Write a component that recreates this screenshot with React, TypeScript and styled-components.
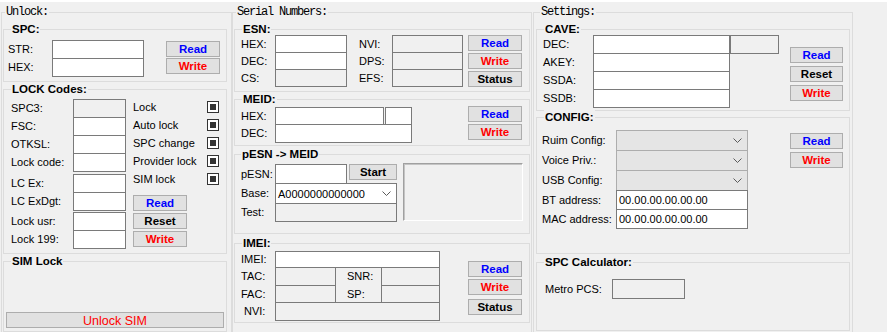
import React from "react";
import styled, { createGlobalStyle } from "styled-components";

const BLUE = "#0000ff";
const RED = "#ff0000";
const INK = "#000";

const GlobalStyle = createGlobalStyle`
  html, body { margin: 0; padding: 0; background: #f0f0f0; overflow: hidden; }
  body { font-family: "Liberation Sans", Arial, sans-serif; font-size: 11px; color: ${INK}; }
`;

const Window = styled.div`
  box-sizing: border-box;
  width: 887px;
  height: 332px;
  overflow: hidden;
  background: #f0f0f0;
  border-top: 2px solid #fff;
`;

const Columns = styled.div`
  display: flex;
  align-items: flex-start;
  padding: 10px 0 0 1px;
`;

const Frame = styled.div<{ $w: number; $h: number; $ml?: number; $mt?: number }>`
  position: relative;
  flex: none;
  box-sizing: border-box;
  width: ${p => p.$w}px;
  height: ${p => p.$h}px;
  margin: ${p => p.$mt ?? 0}px 0 0 ${p => p.$ml ?? 0}px;
  border: 1px solid #dcdcdc;
`;

// group box caption sits over the frame line
const Caption = styled.span<{ $x: number; $mono?: boolean }>`
  position: absolute;
  top: -8px;
  left: ${p => p.$x}px;
  padding: 0 1px;
  background: #f0f0f0;
  white-space: nowrap;
  line-height: 14px;
  font-family: ${p => (p.$mono ? '"Liberation Mono", monospace' : '"Liberation Sans", Arial, sans-serif')};
  font-size: ${p => (p.$mono ? "12px" : "11.5px")};
  font-weight: ${p => (p.$mono ? 400 : 700)};
  letter-spacing: ${p => (p.$mono ? "-1.2px" : "0")};
`;

const Pane = styled.div<{ $pt: number; $pl: number }>`
  display: flex;
  align-items: flex-start;
  padding: ${p => p.$pt}px 0 0 ${p => p.$pl}px;
`;

const Stack = styled.div<{ $mt?: number; $ml?: number }>`
  display: flex;
  flex-direction: column;
  align-items: flex-start;
  margin: ${p => p.$mt ?? 0}px 0 0 ${p => p.$ml ?? 0}px;
  & > * + * { margin-top: -1px; }
`;

const Col = styled.div`
  display: flex;
  flex-direction: column;
`;

const Row = styled.div`
  display: flex;
  align-items: center;
`;

const Label = styled.span<{ $w: number; $pl?: number }>`
  flex: none;
  box-sizing: border-box;
  width: ${p => p.$w}px;
  padding-left: ${p => p.$pl ?? 0}px;
  line-height: 13px;
  white-space: nowrap;
`;

const Box = styled.div<{ $w: number; $h: number; $ro?: boolean; $ml?: number }>`
  flex: none;
  box-sizing: border-box;
  display: flex;
  align-items: center;
  width: ${p => p.$w}px;
  height: ${p => p.$h}px;
  margin-left: ${p => p.$ml ?? 0}px;
  padding-left: 2px;
  border: 1px solid #7a7a7a;
  background: ${p => (p.$ro ? "#f0f0f0" : "#fff")};
  white-space: nowrap;
`;

const Combo = styled.div<{ $w: number; $h: number; $off?: boolean }>`
  flex: none;
  box-sizing: border-box;
  display: flex;
  align-items: center;
  justify-content: space-between;
  width: ${p => p.$w}px;
  height: ${p => p.$h}px;
  padding: 0 5px 0 2px;
  border: 1px solid ${p => (p.$off ? "#adadad" : "#7a7a7a")};
  background: ${p => (p.$off ? "#e5e5e5" : "#fff")};
  white-space: nowrap;
`;

const Sunken = styled.div`
  flex: none;
  box-sizing: border-box;
  width: 120px;
  height: 58px;
  margin: -1px 0 0 6px;
  border: 1px solid;
  border-color: #a0a0a0 #fff #fff #a0a0a0;
  box-shadow: inset 1px 1px 0 #c4c4c4;
  background: #f0f0f0;
`;

const BtnCol = styled.div<{ $ml: number; $mt?: number; $gap: number }>`
  display: flex;
  flex-direction: column;
  gap: ${p => p.$gap}px;
  margin: ${p => p.$mt ?? 0}px 0 0 ${p => p.$ml}px;
`;

const Btn = styled.button<{ $w?: number; $c?: string; $mt?: number; $ml?: number; $plain?: boolean }>`
  flex: none;
  box-sizing: border-box;
  display: flex;
  align-items: flex-start;
  justify-content: center;
  align-self: flex-start;
  width: ${p => p.$w ?? 54}px;
  height: 16px;
  margin: ${p => p.$mt ?? 0}px 0 0 ${p => p.$ml ?? 0}px;
  padding: 0;
  border: 1px solid #adadad;
  background: #e1e1e1;
  color: ${p => p.$c ?? INK};
  font-family: "Liberation Sans", Arial, sans-serif;
  font-size: ${p => (p.$plain ? "12.5px" : "11.5px")};
  font-weight: ${p => (p.$plain ? 400 : 700)};
  span {
    display: block;
    line-height: ${p => (p.$plain ? 16 : 14)}px;
    white-space: nowrap;
  }
`;

const Side = styled.div`
  display: flex;
  flex-direction: column;
  width: 88px;
  margin: -1px 0 0 7px;
`;

const CheckRow = styled.div`
  display: flex;
  align-items: center;
  justify-content: space-between;
  height: 18px;
  padding-right: 2px;
`;

const Check = styled.span`
  flex: none;
  box-sizing: border-box;
  width: 12px;
  height: 12px;
  padding: 2px;
  border: 1px solid #333;
  background: #fff;
  &::after {
    content: "";
    display: block;
    width: 6px;
    height: 6px;
    background: #333;
  }
`;

const SideBtns = styled.div`
  display: flex;
  flex-direction: column;
  align-items: flex-end;
  gap: 2px;
  margin-top: 7px;
`;

const Chevron = () => (
  <svg width="9" height="5" viewBox="0 0 9 5">
    <polyline points="0.5,0.5 4.5,4.5 8.5,0.5" fill="none" stroke="#5a5a5a" strokeWidth="1" />
  </svg>
);

const B = ({ c, w, mt, ml, plain, children }: { c?: string; w?: number; mt?: number; ml?: number; plain?: boolean; children: React.ReactNode }) => (
  <Btn $c={c} $w={w} $mt={mt} $ml={ml} $plain={plain}><span>{children}</span></Btn>
);

const lockA: [string, boolean][] = [["SPC3:", true], ["FSC:", false], ["OTKSL:", false], ["Lock code:", false]];
const lockB = ["LC Ex:", "LC ExDgt:"];
const lockC = ["Lock usr:", "Lock 199:"];
const checks = ["Lock", "Auto lock", "SPC change", "Provider lock", "SIM lock"];

const LockStack = ({ items, mt }: { items: [string, boolean][]; mt?: number }) => (
  <Stack $mt={mt}>
    {items.map(([t, ro]) => (
      <Row key={t}><Label $w={62}>{t}</Label><Box $w={53} $h={19} $ro={ro} /></Row>
    ))}
  </Stack>
);

const Unlock = () => (
  <Frame $w={231} $h={340}>
    <Caption $x={3} $mono>Unlock:</Caption>

    <Frame $w={224} $h={53} $ml={1} $mt={16}>
      <Caption $x={7}>SPC:</Caption>
      <Pane $pt={10} $pl={4}>
        <Stack>
          <Row><Label $w={44}>STR:</Label><Box $w={92} $h={19} /></Row>
          <Row><Label $w={44}>HEX:</Label><Box $w={92} $h={19} /></Row>
        </Stack>
        <BtnCol $ml={22} $mt={1} $gap={1}>
          <B c={BLUE}>Read</B>
          <B c={RED}>Write</B>
        </BtnCol>
      </Pane>
    </Frame>

    <Frame $w={224} $h={165} $ml={1} $mt={7}>
      <Caption $x={7}>LOCK Codes:</Caption>
      <Pane $pt={9} $pl={7}>
        <Col>
          <LockStack items={lockA} />
          <LockStack items={lockB.map(t => [t, false] as [string, boolean])} mt={2} />
          <LockStack items={lockC.map(t => [t, false] as [string, boolean])} mt={1} />
        </Col>
        <Side>
          {checks.map(t => (
            <CheckRow key={t}><span>{t}</span><Check /></CheckRow>
          ))}
          <SideBtns>
            <B c={BLUE}>Read</B>
            <B>Reset</B>
            <B c={RED}>Write</B>
          </SideBtns>
        </Side>
      </Pane>
    </Frame>

    <Frame $w={224} $h={71} $ml={1} $mt={7}>
      <Caption $x={7}>SIM Lock</Caption>
      <Pane $pt={50} $pl={2}>
        <B c={RED} w={218} plain>Unlock SIM</B>
      </Pane>
    </Frame>
  </Frame>
);

const esnLeft: [string, boolean][] = [["HEX:", false], ["DEC:", false], ["CS:", true]];
const esnRight = ["NVI:", "DPS:", "EFS:"];

const Serial = () => (
  <Frame $w={300} $h={340}>
    <Caption $x={3} $mono>Serial Numbers:</Caption>

    <Frame $w={296} $h={63} $ml={1} $mt={16}>
      <Caption $x={7}>ESN:</Caption>
      <Pane $pt={5} $pl={6}>
        <Stack>
          {esnLeft.map(([t, ro]) => (
            <Row key={t}><Label $w={34}>{t}</Label><Box $w={72} $h={18} $ro={ro} /></Row>
          ))}
        </Stack>
        <Stack $ml={12}>
          {esnRight.map(t => (
            <Row key={t}><Label $w={33}>{t}</Label><Box $w={71} $h={18} $ro /></Row>
          ))}
        </Stack>
        <BtnCol $ml={5} $gap={2}>
          <B c={BLUE}>Read</B>
          <B c={RED}>Write</B>
          <B>Status</B>
        </BtnCol>
      </Pane>
    </Frame>

    <Frame $w={296} $h={47} $ml={1} $mt={7}>
      <Caption $x={7}>MEID:</Caption>
      <Pane $pt={7} $pl={6}>
        <Stack>
          <Row><Label $w={34}>HEX:</Label><Box $w={109} $h={18} /><Box $w={27} $h={18} $ml={1} /></Row>
          <Row><Label $w={34}>DEC:</Label><Box $w={137} $h={19} /></Row>
        </Stack>
        <BtnCol $ml={56} $mt={-1} $gap={2}>
          <B c={BLUE}>Read</B>
          <B c={RED}>Write</B>
        </BtnCol>
      </Pane>
    </Frame>

    <Frame $w={296} $h={80} $ml={1} $mt={8}>
      <Caption $x={6}>pESN -&gt; MEID</Caption>
      <Pane $pt={9} $pl={6}>
        <Stack>
          <Row><Label $w={34}>pESN:</Label><Box $w={72} $h={20} /><B w={48} ml={2}>Start</B></Row>
          <Row><Label $w={34}>Base:</Label><Combo $w={122} $h={21}>A0000000000000<Chevron /></Combo></Row>
          <Row><Label $w={34}>Test:</Label><Box $w={122} $h={19} $ro /></Row>
        </Stack>
        <Sunken />
      </Pane>
    </Frame>

    <Frame $w={296} $h={80} $ml={1} $mt={9}>
      <Caption $x={7}>IMEI:</Caption>
      <Pane $pt={7} $pl={6}>
        <Stack>
          <Row><Label $w={34}>IMEI:</Label><Box $w={165} $h={17} /></Row>
          <Row>
            <Label $w={34}>TAC:</Label><Box $w={61} $h={19} $ro />
            <Label $w={45} $pl={11}>SNR:</Label><Box $w={59} $h={19} $ro />
          </Row>
          <Row>
            <Label $w={34}>FAC:</Label><Box $w={61} $h={18} $ro />
            <Label $w={45} $pl={11}>SP:</Label><Box $w={59} $h={18} $ro />
          </Row>
          <Row><Label $w={34} $pl={3}>NVI:</Label><Box $w={165} $h={19} $ro /></Row>
        </Stack>
        <BtnCol $ml={28} $mt={10} $gap={2}>
          <B c={BLUE}>Read</B>
          <B c={RED}>Write</B>
          <B mt={2}>Status</B>
        </BtnCol>
      </Pane>
    </Frame>
  </Frame>
);

const caveRows = ["AKEY:", "SSDA:", "SSDB:"];
const configCombos = ["Ruim Config:", "Voice Priv.:", "USB Config:"];
const configAddr = ["BT address:", "MAC address:"];

const Settings = () => (
  <Frame $w={320} $h={340} $ml={1}>
    <Caption $x={6} $mono>Settings:</Caption>

    <Frame $w={314} $h={82} $ml={2} $mt={16}>
      <Caption $x={7}>CAVE:</Caption>
      <Pane $pt={5} $pl={6}>
        <Stack>
          <Row><Label $w={50}>DEC:</Label><Box $w={137} $h={19} /><Box $w={49} $h={19} $ro /></Row>
          {caveRows.map(t => (
            <Row key={t}><Label $w={50}>{t}</Label><Box $w={137} $h={19} /></Row>
          ))}
        </Stack>
        <BtnCol $ml={11} $mt={12} $gap={3}>
          <B c={BLUE} w={53}>Read</B>
          <B w={53}>Reset</B>
          <B c={RED} w={53}>Write</B>
        </BtnCol>
      </Pane>
    </Frame>

    <Frame $w={314} $h={137} $ml={2} $mt={6}>
      <Caption $x={7}>CONFIG:</Caption>
      <Pane $pt={12} $pl={5}>
        <Stack>
          {configCombos.map(t => (
            <Row key={t}><Label $w={74}>{t}</Label><Combo $w={132} $h={21} $off><span /><Chevron /></Combo></Row>
          ))}
          {configAddr.map(t => (
            <Row key={t}><Label $w={74}>{t}</Label><Box $w={132} $h={20}>00.00.00.00.00.00</Box></Row>
          ))}
        </Stack>
        <BtnCol $ml={42} $mt={3} $gap={3}>
          <B c={BLUE} w={53}>Read</B>
          <B c={RED} w={53}>Write</B>
        </BtnCol>
      </Pane>
    </Frame>

    <Frame $w={314} $h={69} $ml={2} $mt={8}>
      <Caption $x={7}>SPC Calculator:</Caption>
      <Pane $pt={16} $pl={8}>
        <Row><Label $w={67}>Metro PCS:</Label><Box $w={73} $h={20} $ro /></Row>
      </Pane>
    </Frame>
  </Frame>
);

export default function App() {
  return (
    <>
      <GlobalStyle />
      <Window>
        <Columns>
          <Unlock />
          <Serial />
          <Settings />
        </Columns>
      </Window>
    </>
  );
}
